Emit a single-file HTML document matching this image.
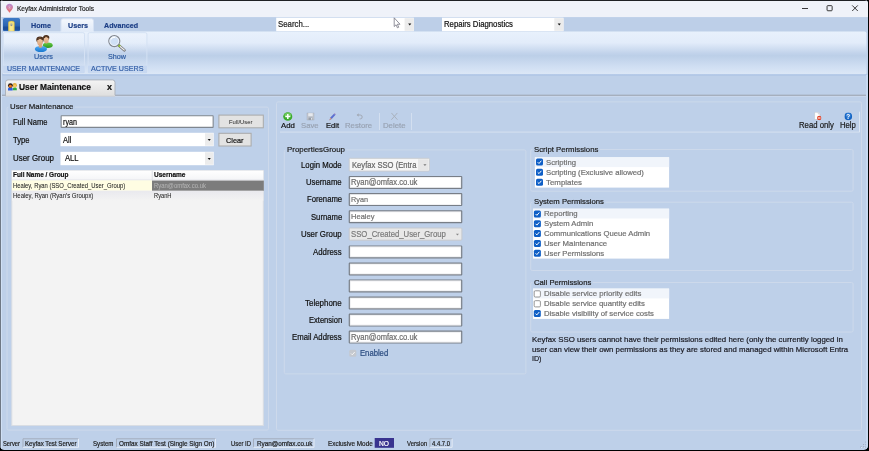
<!DOCTYPE html>
<html><head><meta charset="utf-8"><title>Keyfax Administrator Tools</title>
<style>
html,body{margin:0;padding:0;background:#000;}
body{width:869px;height:451px;position:relative;overflow:hidden;font-family:"Liberation Sans",sans-serif;}
#win{position:absolute;left:0;top:0;width:867.9px;height:449.700px;border-radius:3.5px 3.5px 4.5px 4.5px;overflow:hidden;will-change:transform;filter:blur(.4px);}
#win>svg{position:absolute;left:0;top:0;}
.t{position:absolute;white-space:nowrap;transform-origin:0 50%;display:block;-webkit-text-stroke:.2px;}
</style></head><body>
<div id="win">
<svg width="869" height="451" viewBox="0 0 869 451">
<defs><linearGradient id="g1" x1="0" y1="0" x2="0" y2="1"><stop offset="0" stop-color="#b68bd2"/><stop offset="0.45" stop-color="#d080a6"/><stop offset="1" stop-color="#ec6a5a"/></linearGradient><linearGradient id="g2" x1="0" y1="0" x2="0" y2="1"><stop offset="0" stop-color="#3f7ac6"/><stop offset="0.62" stop-color="#2a62b0"/><stop offset="0.66" stop-color="#1c4d9a"/><stop offset="0.86" stop-color="#1c4d9a"/><stop offset="0.9" stop-color="#2a62b0"/><stop offset="1" stop-color="#2a62b0"/></linearGradient><linearGradient id="g3" x1="0" y1="0" x2="0" y2="1"><stop offset="0" stop-color="#f4f8fd"/><stop offset="1" stop-color="#e0eaf8"/></linearGradient><linearGradient id="g4" x1="0" y1="0" x2="0" y2="1"><stop offset="0" stop-color="#e8f1fc"/><stop offset="0.26" stop-color="#e2ecfa"/><stop offset="0.5" stop-color="#c2d3eb"/><stop offset="0.56" stop-color="#bccfe8"/><stop offset="0.8" stop-color="#cfdef2"/><stop offset="1" stop-color="#dde8f7"/></linearGradient><linearGradient id="g5" x1="0" y1="0" x2="0" y2="1"><stop offset="0" stop-color="#fff" stop-opacity="0.18"/><stop offset="0.5" stop-color="#fff" stop-opacity="0"/><stop offset="1" stop-color="#fff" stop-opacity="0.12"/></linearGradient><linearGradient id="g6" x1="0" y1="0" x2="0" y2="1"><stop offset="0" stop-color="#6bcb45"/><stop offset="1" stop-color="#2b9620"/></linearGradient><linearGradient id="g7" x1="0" y1="0" x2="0" y2="1"><stop offset="0" stop-color="#58aef2"/><stop offset="0.55" stop-color="#2f8fe2"/><stop offset="1" stop-color="#1b78cc"/></linearGradient><linearGradient id="g8" x1="0" y1="0" x2="0" y2="1"><stop offset="0" stop-color="#f3cba6"/><stop offset="1" stop-color="#dba47a"/></linearGradient><linearGradient id="g9" x1="0" y1="0" x2="0" y2="1"><stop offset="0" stop-color="#f4f4f4"/><stop offset="0.5" stop-color="#e9e9e9"/><stop offset="1" stop-color="#dedede"/></linearGradient><linearGradient id="g10" x1="0" y1="0" x2="0" y2="1"><stop offset="0" stop-color="#fff"/><stop offset="1" stop-color="#f4f5f7"/></linearGradient><linearGradient id="g11" x1="0" y1="0" x2="0" y2="1"><stop offset="0" stop-color="#e9e9ee"/><stop offset="1" stop-color="#f3f3f3"/></linearGradient></defs>
<rect x="0" y="0" width="869" height="451" fill="#bed0e9"/>
<rect x="0" y="0" width="869" height="17.3" fill="#eff2f9"/>
<path d="M9.500 3.700C7.500 3.700 6 5.200 6 7.100c0 1.500 1 2.700 2 3.700l1.500 2 1.500-2c1-1 2-2.200 2-3.700C13 5.200 11.500 3.700 9.500 3.700z" fill="url(#g1)"/><path d="M9.500 5.200v4.600M8 6.300l3 2.400M11 6.300l-3 2.400" stroke="#f3d3e3" stroke-width=".45" opacity=".6" fill="none"/>
<path d="M802 8.500h6" stroke="#222" stroke-width=".9" fill="none"/>
<rect x="827.05" y="5.65" width="5.1" height="5.1" rx="0.75" fill="none" stroke="#222" stroke-width="0.9"/>
<path d="M852.200 5.400l5.600 5.600M857.800 5.400l-5.600 5.600" stroke="#222" stroke-width=".9" fill="none"/>
<rect x="0" y="17.3" width="869" height="14.2" fill="#bdcfe8"/>
<rect x="3" y="18" width="17" height="13.3" rx="1.5" fill="url(#g2)"/>
<svg x="8" y="20.6" width="6.8" height="10.8" viewBox="0 0 7 11"><path d="M.3 11V2.300C.3 1 1.300 .3 3.500 .3S6.700 1 6.700 2.300V11z" fill="#f4dc6c" stroke="#c9aa3c" stroke-width=".5"/><path d="M2 2.200V10.500h3V2.200z" fill="#fbeea0" opacity=".7"/><path d="M2.400 3.200h2.200M2.500 4.300h2l-1 1.300z" stroke="#7b8296" stroke-width=".5" fill="#7b8296"/></svg>
<path d="M61 32V20.800q0-2 2-2h28.500q2 0 2 2V32z" fill="url(#g3)" stroke="#d5e1f3" stroke-width="1"/>
<rect x="276.2" y="17.7" width="137.6" height="13.5" fill="#fff"/>
<rect x="404.6" y="18.2" width="9.2" height="12.6" fill="#ececec"/>
<path d="M408.2 23.6h3.100l-1.550 1.900z" fill="#111"/>
<path d="M394.200 17.800v8.700l1.900-1.700 1.300 3 1.300-.55-1.300-3h2.600z" fill="#fff" stroke="#6f6f7c" stroke-width=".75" stroke-linejoin="round"/>
<rect x="442" y="17.7" width="121.5" height="13.5" fill="#fff"/>
<rect x="554.3" y="18.2" width="9.2" height="12.6" fill="#ececec"/>
<path d="M557.7 23.6h3.100l-1.550 1.900z" fill="#111"/>
<rect x="2.5" y="31.5" width="864" height="43.3" rx="2" fill="url(#g4)"/>
<rect x="2.5" y="74.4" width="864" height="1" fill="#a2bbe2"/>
<rect x="3.3" y="32.7" width="81.2" height="40.2" rx="1.5" fill="url(#g5)" stroke="#d4e1f3" stroke-width="1"/>
<rect x="3.3" y="65.7" width="81.2" height="7.2" fill="#bcd1ef" opacity=".6"/>
<rect x="88.1" y="32.7" width="58.8" height="40.2" rx="1.5" fill="url(#g5)" stroke="#d4e1f3" stroke-width="1"/>
<rect x="88.1" y="65.7" width="58.8" height="7.2" fill="#bcd1ef" opacity=".6"/>
<g><ellipse cx="43.500" cy="44" rx="9.800" ry="8.800" fill="#fff" opacity=".18"/><ellipse cx="47.800" cy="45.300" rx="4.900" ry="2.700" fill="url(#g6)"/><ellipse cx="46.200" cy="37.700" rx="3.100" ry="2.800" fill="#4b2e1b"/><ellipse cx="46.300" cy="40" rx="2.400" ry="3.500" fill="url(#g8)"/><path d="M43.300 38.200c.8-2.300 4.800-2.700 5.900-.3-1.300.2-2.400-.3-3.100-1.100-.6.900-1.600 1.400-2.800 1.400z" fill="#4b2e1b"/><ellipse cx="40.900" cy="49" rx="6.100" ry="3.050" fill="url(#g7)"/><ellipse cx="40.400" cy="46.200" rx="1.700" ry="1.600" fill="#d9a57b"/><ellipse cx="40" cy="39.700" rx="3.700" ry="3.200" fill="#4b2e1b"/><ellipse cx="40" cy="41.700" rx="2.850" ry="3.900" fill="url(#g8)"/><path d="M36.500 40.200c.7-3 6-3.400 7-.3-1.500.2-2.800-.4-3.600-1.400-.7 1.100-1.900 1.700-3.400 1.700z" fill="#4b2e1b"/></g>
<path d="M118.600 45.200l5.800 5" stroke="#6e6e6e" stroke-width="2.700" stroke-linecap="round"/><path d="M119 45.500l5.200 4.500" stroke="#ececec" stroke-width="1.200" stroke-linecap="round"/><path d="M117.900 44.600l2.100 1.800" stroke="#8fc02c" stroke-width="2.300"/><circle cx="114.300" cy="41.100" r="5.500" fill="#d0e0f5" stroke="#83878e" stroke-width="1.200"/><circle cx="114.300" cy="41.100" r="4.400" fill="none" stroke="#f1f6fc" stroke-width=".9"/><path d="M111 39.400a3.500 3.500 0 0 1 4.100-2" stroke="#fff" stroke-width="1.100" fill="none"/>
<rect x="1" y="94.6" width="865" height="1.4" fill="#a6afbd"/>
<rect x="1" y="96" width="865" height="1" fill="#c9d7ec"/>
<path d="M5.500 96V82.400q0-2.500 2.500-2.500h104.500q2.500 0 2.500 2.500V96z" fill="url(#g9)" stroke="#adb3bd" stroke-width="1"/>
<rect x="6" y="95.2" width="109" height="1.2" fill="#dedede"/>
<g><path d="M12.900 90.200v-1.500c0-.9.800-1.300 1.900-1.300s2 .4 2 1.300v1.500z" fill="#2fae3f"/><circle cx="14.700" cy="85.300" r="2.200" fill="#e2ae3e"/><circle cx="14.700" cy="85.900" r="1.400" fill="#f7c95f"/><path d="M8 90.400v-1.600c0-.9 1-1.400 2.300-1.400s2.400.5 2.400 1.400v1.600z" fill="#2c5fe0"/><circle cx="10.400" cy="85.600" r="2.400" fill="#2c1d15"/><circle cx="10.400" cy="86.200" r="1.450" fill="#e9731d"/></g>
<rect x="7" y="107.1" width="261.5" height="323" rx="1.5" fill="none" stroke="#cdd9eb" stroke-width="1"/>
<rect x="8.5" y="102.6" width="66.5" height="8" fill="#bed0e9"/>
<rect x="61.15" y="115.75" width="152" height="11.6" rx="0.45" fill="#fff" stroke="#7f868f" stroke-width="1.1"/>
<rect x="60.5" y="132.8" width="153.2" height="13.4" fill="#fff"/>
<rect x="205" y="133.3" width="8.2" height="12.4" fill="#ececec"/>
<path d="M207.7 139h3.100l-1.550 1.900z" fill="#111"/>
<rect x="60.5" y="151.8" width="153.2" height="13.4" fill="#fff"/>
<rect x="205" y="152.3" width="8.2" height="12.4" fill="#ececec"/>
<path d="M207.7 158h3.100l-1.550 1.900z" fill="#111"/>
<rect x="218.9" y="115.1" width="44.4" height="12.7" fill="#e3e3e3" stroke="#a9a9a9" stroke-width="1"/>
<rect x="218.9" y="133.3" width="32.2" height="12.7" fill="#e3e3e3" stroke="#a9a9a9" stroke-width="1"/>
<rect x="11.8" y="170.5" width="251.5" height="255" fill="#f3f3f3" stroke="#d9dde3" stroke-width="1"/>
<rect x="12" y="170.6" width="251.3" height="9.6" fill="url(#g10)"/>
<rect x="12" y="179.6" width="251.3" height="0.8" fill="#dfe2e7"/>
<rect x="151.7" y="170.6" width="1" height="9.6" fill="#dcdfe4"/>
<rect x="12" y="180.4" width="140" height="10.2" fill="#fffde3"/>
<rect x="152" y="180.6" width="111.8" height="10.2" fill="#7c7c7c"/>
<rect x="12" y="190.8" width="251.3" height="10" fill="url(#g11)"/>
<rect x="276.5" y="101.9" width="585" height="328.4" rx="1.5" fill="none" stroke="#cdd9eb" stroke-width="1"/>
<rect x="280" y="131.6" width="579.5" height="1" fill="#d6e1f1"/>
<rect x="859" y="111.7" width="1" height="20.5" fill="#dde7f4"/>
<rect x="379" y="113" width="1" height="17" fill="#d3dff0"/>
<rect x="411" y="113" width="1" height="17" fill="#d3dff0"/>
<svg x="283" y="112" width="9.6" height="9" viewBox="0 0 9.6 9"><ellipse cx="4.800" cy="4.500" rx="4.600" ry="4.300" fill="#3cab2c"/><ellipse cx="4.800" cy="3" rx="3.400" ry="2.200" fill="#7fd46a" opacity=".7"/><path d="M4.800 2v5M2.300 4.500h5" stroke="#fff" stroke-width="1.500"/></svg>
<svg x="306.5" y="112.5" width="8" height="8" viewBox="0 0 8 8"><path d="M.4 .4h7.200v7.200H.4z" fill="#c3c8d0" stroke="#a3a9b3" stroke-width=".6"/><rect x="1.800" y=".7" width="4.400" height="2.800" fill="#e6e9ee"/><rect x="2" y="5" width="4" height="2.600" fill="#9aa0aa"/><rect x="4.600" y="5.400" width="1" height="1.800" fill="#e6e9ee"/></svg>
<svg x="328.5" y="112" width="8" height="9" viewBox="0 0 8 9"><path d="M1.200 7.800l.6-2.200L6 1.200l1.300 1.300L3.200 7z" fill="#5b6fd0"/><path d="M5.400 1.800L6.200 1l1.300 1.300-.8.800z" fill="#b7a3c8"/><path d="M1.200 7.800l.6-2.200 1.400 1.400z" fill="#e2a070"/><path d="M.9 8.200l.5-.8.500.5z" fill="#c03030"/></svg>
<svg x="356.3" y="112.8" width="7" height="7" viewBox="0 0 7 7"><path d="M1.300 2.200h2.600a2 2 0 0 1 0 4H3.300" fill="none" stroke="#a2a9b5" stroke-width="1"/><path d="M.3 2.200L2.300 .5v3.400z" fill="#a2a9b5"/></svg>
<svg x="390.8" y="112.3" width="7.2" height="8" viewBox="0 0 7.2 8"><path d="M.6 .6l6 6.800M6.600 .6l-6 6.800" stroke="#a9b1bd" stroke-width="1"/></svg>
<svg x="813.8" y="112" width="8" height="8.5" viewBox="0 0 8 8.5"><path d="M.8 .3h3.600l1.800 1.800v5.400H.8z" fill="#fff" stroke="#b9bec6" stroke-width=".5"/><path d="M4.400 .3v1.800h1.800" fill="#e4e7ec" stroke="#b9bec6" stroke-width=".4"/><circle cx="5.400" cy="6" r="2.200" fill="#e0442c"/><rect x="4.100" y="5.500" width="2.600" height="1" fill="#fff"/></svg>
<svg x="844.3" y="112.4" width="8" height="8" viewBox="0 0 8 8"><circle cx="4" cy="4" r="3.800" fill="#1463c2"/><circle cx="4" cy="3" r="2.600" fill="#3d8be0" opacity=".6"/><text x="4" y="6.300" text-anchor="middle" font-family="Liberation Sans, sans-serif" font-weight="bold" font-size="6.400" fill="#fff">?</text></svg>
<rect x="284.3" y="149.9" width="241.6" height="224" rx="1.5" fill="none" stroke="#cdd9eb" stroke-width="1"/>
<rect x="285.5" y="145.4" width="61" height="8" fill="#bed0e9"/>
<rect x="349.2" y="158.3" width="80.2" height="12.8" rx="1" fill="#f6f6f6" stroke="#c9ccd1" stroke-width="1"/>
<rect x="418" y="159.2" width="10.5" height="11" fill="#e6e6e6"/>
<path d="M423.4 164.2h3.100l-1.550 1.900z" fill="#777"/>
<rect x="349.2" y="228" width="112.7" height="12.2" rx="1" fill="#e8e8e8" stroke="#c6c9ce" stroke-width="1"/>
<path d="M455.9 233.7h3.100l-1.550 1.900z" fill="#888"/>
<rect x="349.3" y="176.5" width="112.4" height="11.8" rx="0.4" fill="#fff" stroke="#787e87" stroke-width="1.2"/>
<rect x="350.35" y="177.55" width="110.3" height="9.7" fill="none" stroke="#e3e5e9" stroke-width="0.5"/>
<rect x="349.3" y="193.7" width="112.4" height="11.8" rx="0.4" fill="#fff" stroke="#787e87" stroke-width="1.2"/>
<rect x="350.35" y="194.75" width="110.3" height="9.7" fill="none" stroke="#e3e5e9" stroke-width="0.5"/>
<rect x="349.3" y="210.9" width="112.4" height="11.8" rx="0.4" fill="#fff" stroke="#787e87" stroke-width="1.2"/>
<rect x="350.35" y="211.95" width="110.3" height="9.7" fill="none" stroke="#e3e5e9" stroke-width="0.5"/>
<rect x="349.3" y="246" width="112.4" height="11.8" rx="0.4" fill="#fff" stroke="#787e87" stroke-width="1.2"/>
<rect x="350.35" y="247.05" width="110.3" height="9.7" fill="none" stroke="#e3e5e9" stroke-width="0.5"/>
<rect x="349.3" y="263.1" width="112.4" height="11.8" rx="0.4" fill="#fff" stroke="#787e87" stroke-width="1.2"/>
<rect x="350.35" y="264.15" width="110.3" height="9.7" fill="none" stroke="#e3e5e9" stroke-width="0.5"/>
<rect x="349.3" y="280" width="112.4" height="11.8" rx="0.4" fill="#fff" stroke="#787e87" stroke-width="1.2"/>
<rect x="350.35" y="281.05" width="110.3" height="9.7" fill="none" stroke="#e3e5e9" stroke-width="0.5"/>
<rect x="349.3" y="297.1" width="112.4" height="11.8" rx="0.4" fill="#fff" stroke="#787e87" stroke-width="1.2"/>
<rect x="350.35" y="298.15" width="110.3" height="9.7" fill="none" stroke="#e3e5e9" stroke-width="0.5"/>
<rect x="349.3" y="314.2" width="112.4" height="11.8" rx="0.4" fill="#fff" stroke="#787e87" stroke-width="1.2"/>
<rect x="350.35" y="315.25" width="110.3" height="9.7" fill="none" stroke="#e3e5e9" stroke-width="0.5"/>
<rect x="349.3" y="331.2" width="112.4" height="11.8" rx="0.4" fill="#fff" stroke="#787e87" stroke-width="1.2"/>
<rect x="350.35" y="332.25" width="110.3" height="9.7" fill="none" stroke="#e3e5e9" stroke-width="0.5"/>
<rect x="349.3" y="349.8" width="7" height="7" rx="1.5" fill="#c4c8cf"/>
<path d="M351 353.5l1.300 1.300 2.400-2.800" stroke="#f6f6f6" stroke-width="1" fill="none"/>
<rect x="530.7" y="149.5" width="322.4" height="41.7" rx="1.5" fill="none" stroke="#cdd9eb" stroke-width="1"/>
<rect x="532.5" y="145" width="67.4" height="8" fill="#bed0e9"/>
<rect x="534.9" y="157.3" width="134.2" height="30.3" fill="#fff"/>
<rect x="534.9" y="157.3" width="134.2" height="9.8" fill="#f1f5fb"/>
<rect x="536" y="158.6" width="7" height="7" rx="1.5" fill="#0f5fc6"/>
<path d="M537.7 162.2l1.300 1.300 2.400-2.800" stroke="#fff" stroke-width="1" fill="none"/>
<rect x="536" y="168.7" width="7" height="7" rx="1.5" fill="#0f5fc6"/>
<path d="M537.7 172.3l1.300 1.300 2.400-2.800" stroke="#fff" stroke-width="1" fill="none"/>
<rect x="536" y="178.7" width="7" height="7" rx="1.5" fill="#0f5fc6"/>
<path d="M537.7 182.3l1.300 1.300 2.400-2.800" stroke="#fff" stroke-width="1" fill="none"/>
<rect x="530.7" y="202.2" width="322.4" height="68.3" rx="1.5" fill="none" stroke="#cdd9eb" stroke-width="1"/>
<rect x="532.5" y="197.7" width="73" height="8" fill="#bed0e9"/>
<rect x="533.1" y="208.7" width="136" height="49.9" fill="#fff"/>
<rect x="533.1" y="208.7" width="136" height="9.8" fill="#f1f5fb"/>
<rect x="533.9" y="210.4" width="7" height="7" rx="1.5" fill="#0f5fc6"/>
<path d="M535.6 214l1.300 1.300 2.400-2.800" stroke="#fff" stroke-width="1" fill="none"/>
<rect x="533.9" y="220.2" width="7" height="7" rx="1.5" fill="#0f5fc6"/>
<path d="M535.6 223.8l1.300 1.300 2.400-2.800" stroke="#fff" stroke-width="1" fill="none"/>
<rect x="533.9" y="230" width="7" height="7" rx="1.5" fill="#0f5fc6"/>
<path d="M535.6 233.6l1.300 1.300 2.400-2.800" stroke="#fff" stroke-width="1" fill="none"/>
<rect x="533.9" y="240" width="7" height="7" rx="1.5" fill="#0f5fc6"/>
<path d="M535.6 243.6l1.300 1.300 2.400-2.800" stroke="#fff" stroke-width="1" fill="none"/>
<rect x="533.9" y="249.7" width="7" height="7" rx="1.5" fill="#0f5fc6"/>
<path d="M535.6 253.3l1.300 1.300 2.400-2.800" stroke="#fff" stroke-width="1" fill="none"/>
<rect x="530.7" y="282.5" width="322.4" height="49.5" rx="1.5" fill="none" stroke="#cdd9eb" stroke-width="1"/>
<rect x="532.5" y="278" width="60.3" height="8" fill="#bed0e9"/>
<rect x="533.1" y="288.6" width="136" height="30.3" fill="#fff"/>
<rect x="533.1" y="288.6" width="136" height="9.8" fill="#f1f5fb"/>
<rect x="534.2" y="290.8" width="6.2" height="6.2" rx="1.1" fill="#fff" stroke="#7d7d7d" stroke-width="0.8"/>
<rect x="534.2" y="300.7" width="6.2" height="6.2" rx="1.1" fill="#fff" stroke="#7d7d7d" stroke-width="0.8"/>
<rect x="533.8" y="310" width="7" height="7" rx="1.5" fill="#0f5fc6"/>
<path d="M535.5 313.6l1.300 1.300 2.400-2.800" stroke="#fff" stroke-width="1" fill="none"/>
<path d="M23 447.300V438.800H78.5" fill="none" stroke="#a3adbd" stroke-width="1"/>
<path d="M23 447.300H78.5V438.800" fill="none" stroke="#e4ebf6" stroke-width="1"/>
<path d="M116.5 447.300V438.800H215.5" fill="none" stroke="#a3adbd" stroke-width="1"/>
<path d="M116.5 447.300H215.5V438.800" fill="none" stroke="#e4ebf6" stroke-width="1"/>
<path d="M253.5 447.300V438.800H314" fill="none" stroke="#a3adbd" stroke-width="1"/>
<path d="M253.5 447.300H314V438.800" fill="none" stroke="#e4ebf6" stroke-width="1"/>
<rect x="374.7" y="438" width="19.3" height="9.8" fill="#39338f"/>
<path d="M429.9 447.300V438.800H452.1" fill="none" stroke="#a3adbd" stroke-width="1"/>
<path d="M429.9 447.300H452.1V438.800" fill="none" stroke="#e4ebf6" stroke-width="1"/>
<rect x="865.5" y="446.5" width="1.2" height="1.2" fill="#8f9fb8"/>
<rect x="866.1" y="447.1" width="0.9" height="0.9" fill="#f2f6fb"/>
<rect x="863" y="446.5" width="1.2" height="1.2" fill="#8f9fb8"/>
<rect x="863.6" y="447.1" width="0.9" height="0.9" fill="#f2f6fb"/>
<rect x="865.5" y="444" width="1.2" height="1.2" fill="#8f9fb8"/>
<rect x="866.1" y="444.6" width="0.9" height="0.9" fill="#f2f6fb"/>
<rect x="860.5" y="446.5" width="1.2" height="1.2" fill="#8f9fb8"/>
<rect x="861.1" y="447.1" width="0.9" height="0.9" fill="#f2f6fb"/>
<rect x="863" y="444" width="1.2" height="1.2" fill="#8f9fb8"/>
<rect x="863.6" y="444.6" width="0.9" height="0.9" fill="#f2f6fb"/>
<rect x="865.5" y="441.5" width="1.2" height="1.2" fill="#8f9fb8"/>
<rect x="866.1" y="442.1" width="0.9" height="0.9" fill="#f2f6fb"/>
<rect x="0" y="0" width="0.9" height="451" fill="#5b626d"/>
<rect x="0.9" y="17.3" width="1.1" height="433" fill="#d0e0f5"/>
<rect x="866" y="75" width="2" height="376" fill="#c7d9f1"/>
<rect x="0" y="0" width="869" height="1" fill="#1e2024"/>
</svg>
<span class="t" style="left:17px;top:3px;font-size:7.4px;line-height:11px;color:#1c1c1c;transform:scaleX(0.8845)">Keyfax Administrator Tools</span>
<span class="t" style="left:31px;top:20px;font-size:7.6px;line-height:11px;color:#1d3f86;font-weight:bold;transform:scaleX(0.9472)">Home</span>
<span class="t" style="left:67.5px;top:20px;font-size:7.6px;line-height:11px;color:#1d3f86;font-weight:bold;transform:scaleX(0.9467)">Users</span>
<span class="t" style="left:103.5px;top:20px;font-size:7.6px;line-height:11px;color:#1d3f86;font-weight:bold;transform:scaleX(0.9361)">Advanced</span>
<span class="t" style="left:277.8px;top:19px;font-size:8.2px;line-height:11px;color:#222;transform:scaleX(0.9539)">Search...</span>
<span class="t" style="left:444px;top:19px;font-size:8.2px;line-height:11px;color:#111;transform:scaleX(0.9463)">Repairs Diagnostics</span>
<span class="t" style="left:34px;top:51px;font-size:8.1px;line-height:11px;color:#2c5aa0;transform:scaleX(0.8983)">Users</span>
<span class="t" style="left:108px;top:51px;font-size:8.1px;line-height:11px;color:#2c5aa0;transform:scaleX(0.8884)">Show</span>
<span class="t" style="left:7px;top:63px;font-size:8.1px;line-height:11px;color:#345fa6;transform:scaleX(0.8720)">USER MAINTENANCE</span>
<span class="t" style="left:90.5px;top:63px;font-size:8.1px;line-height:11px;color:#345fa6;transform:scaleX(0.8836)">ACTIVE USERS</span>
<span class="t" style="left:19px;top:82px;font-size:8.2px;line-height:11px;color:#111;font-weight:bold;transform:scaleX(1.0260)">User Maintenance</span>
<span class="t" style="left:106.5px;top:81px;font-size:8.6px;line-height:12px;color:#111;font-weight:bold;transform:scaleX(1.0455)">x</span>
<span class="t" style="left:10px;top:101px;font-size:8.1px;line-height:11px;color:#1b1b1b;transform:scaleX(0.9661)">User Maintenance</span>
<span class="t" style="left:12.5px;top:117px;font-size:8.2px;line-height:11px;color:#111;transform:scaleX(0.9234)">Full Name</span>
<span class="t" style="left:12.5px;top:135px;font-size:8.2px;line-height:11px;color:#111;transform:scaleX(0.9282)">Type</span>
<span class="t" style="left:12.5px;top:153px;font-size:8.2px;line-height:11px;color:#111;transform:scaleX(0.9675)">User Group</span>
<span class="t" style="left:62.5px;top:117px;font-size:8.2px;line-height:11px;color:#111;transform:scaleX(0.8777)">ryan</span>
<span class="t" style="left:63px;top:135px;font-size:8.2px;line-height:11px;color:#111;transform:scaleX(0.9107)">All</span>
<span class="t" style="left:65px;top:153px;font-size:8.2px;line-height:11px;color:#111;transform:scaleX(0.9253)">ALL</span>
<span class="t" style="left:229px;top:117px;font-size:6.2px;line-height:9px;color:#222;-webkit-text-stroke:0px;transform:scaleX(0.9475)">Full/User</span>
<span class="t" style="left:226px;top:135px;font-size:8px;line-height:11px;color:#111;transform:scaleX(0.9155)">Clear</span>
<span class="t" style="left:13px;top:170px;font-size:6.9px;line-height:9px;color:#111;font-weight:bold;transform:scaleX(0.9340)">Full Name / Group</span>
<span class="t" style="left:153.5px;top:170px;font-size:6.9px;line-height:9px;color:#111;font-weight:bold;transform:scaleX(0.9440)">Username</span>
<span class="t" style="left:13px;top:181px;font-size:6.7px;line-height:9px;color:#222;-webkit-text-stroke:0.05px;transform:scaleX(0.8791)">Healey, Ryan (SSO_Created_User_Group)</span>
<span class="t" style="left:153.5px;top:181px;font-size:6.7px;line-height:9px;color:#b4b4b4;-webkit-text-stroke:0.05px;transform:scaleX(0.8880)">Ryan@omfax.co.uk</span>
<span class="t" style="left:13px;top:191px;font-size:6.7px;line-height:9px;color:#222;-webkit-text-stroke:0.05px;transform:scaleX(0.8930)">Healey, Ryan (Ryan's Groupx)</span>
<span class="t" style="left:153.5px;top:191px;font-size:6.7px;line-height:9px;color:#222;-webkit-text-stroke:0.05px;transform:scaleX(0.8545)">RyanH</span>
<span class="t" style="left:280.6px;top:120px;font-size:8.1px;line-height:11px;color:#111;transform:scaleX(0.9645)">Add</span>
<span class="t" style="left:301px;top:120px;font-size:8.1px;line-height:11px;color:#98a2b2;transform:scaleX(0.9533)">Save</span>
<span class="t" style="left:325.5px;top:120px;font-size:8.1px;line-height:11px;color:#111;transform:scaleX(0.9314)">Edit</span>
<span class="t" style="left:345.4px;top:120px;font-size:8.1px;line-height:11px;color:#98a2b2;transform:scaleX(0.9556)">Restore</span>
<span class="t" style="left:382.5px;top:120px;font-size:8.1px;line-height:11px;color:#98a2b2;transform:scaleX(0.9610)">Delete</span>
<span class="t" style="left:799px;top:120px;font-size:8.2px;line-height:11px;color:#1b1b1b;transform:scaleX(0.9452)">Read only</span>
<span class="t" style="left:839.7px;top:120px;font-size:8.2px;line-height:11px;color:#1b1b1b;transform:scaleX(0.9428)">Help</span>
<span class="t" style="left:287px;top:144px;font-size:8.1px;line-height:11px;color:#1b1b1b;transform:scaleX(0.9760)">PropertiesGroup</span>
<span class="t" style="left:301px;top:160px;font-size:8.2px;line-height:11px;color:#111;transform:scaleX(0.9498)">Login Mode</span>
<span class="t" style="left:306px;top:177px;font-size:8.2px;line-height:11px;color:#111;transform:scaleX(0.9439)">Username</span>
<span class="t" style="left:306.5px;top:194px;font-size:8.2px;line-height:11px;color:#111;transform:scaleX(0.9420)">Forename</span>
<span class="t" style="left:310.5px;top:212px;font-size:8.2px;line-height:11px;color:#111;transform:scaleX(0.9378)">Surname</span>
<span class="t" style="left:301px;top:229px;font-size:8.2px;line-height:11px;color:#111;transform:scaleX(0.9604)">User Group</span>
<span class="t" style="left:313px;top:247px;font-size:8.2px;line-height:11px;color:#111;transform:scaleX(0.9541)">Address</span>
<span class="t" style="left:305px;top:298px;font-size:8.2px;line-height:11px;color:#111;transform:scaleX(0.9698)">Telephone</span>
<span class="t" style="left:308.5px;top:315px;font-size:8.2px;line-height:11px;color:#111;transform:scaleX(0.9220)">Extension</span>
<span class="t" style="left:292px;top:332px;font-size:8.2px;line-height:11px;color:#111;transform:scaleX(0.9483)">Email Address</span>
<span class="t" style="left:351.5px;top:160px;font-size:8.2px;line-height:11px;color:#666;transform:scaleX(0.9311)">Keyfax SSO (Entra</span>
<span class="t" style="left:351px;top:229px;font-size:8.2px;line-height:11px;color:#7b7b7b;transform:scaleX(0.9475)">SSO_Created_User_Group</span>
<span class="t" style="left:351px;top:177px;font-size:8.2px;line-height:11px;color:#6d6d6d;transform:scaleX(0.9279)">Ryan@omfax.co.uk</span>
<span class="t" style="left:351px;top:194px;font-size:8.1px;line-height:11px;color:#707070;transform:scaleX(0.8991)">Ryan</span>
<span class="t" style="left:351px;top:211px;font-size:8.1px;line-height:11px;color:#707070;transform:scaleX(0.9321)">Healey</span>
<span class="t" style="left:351px;top:332px;font-size:8.2px;line-height:11px;color:#6d6d6d;transform:scaleX(0.9279)">Ryan@omfax.co.uk</span>
<span class="t" style="left:359.8px;top:348px;font-size:8.2px;line-height:11px;color:#2b4c80;transform:scaleX(0.9371)">Enabled</span>
<span class="t" style="left:534px;top:144px;font-size:8.1px;line-height:11px;color:#1b1b1b;transform:scaleX(0.9603)">Script Permissions</span>
<span class="t" style="left:546px;top:157px;font-size:8.1px;line-height:11px;color:#6f6f6f;transform:scaleX(0.9520)">Scripting</span>
<span class="t" style="left:546px;top:167px;font-size:8.1px;line-height:11px;color:#6f6f6f;transform:scaleX(0.9507)">Scripting (Exclusive allowed)</span>
<span class="t" style="left:546px;top:177px;font-size:8.1px;line-height:11px;color:#6f6f6f;transform:scaleX(0.9752)">Templates</span>
<span class="t" style="left:534px;top:196px;font-size:8.1px;line-height:11px;color:#1b1b1b;transform:scaleX(0.9541)">System Permissions</span>
<span class="t" style="left:543.8px;top:208px;font-size:8.1px;line-height:11px;color:#6f6f6f;transform:scaleX(0.9596)">Reporting</span>
<span class="t" style="left:543.8px;top:218px;font-size:8.1px;line-height:11px;color:#6f6f6f;transform:scaleX(0.9504)">System Admin</span>
<span class="t" style="left:543.8px;top:228px;font-size:8.1px;line-height:11px;color:#6f6f6f;transform:scaleX(0.9512)">Communications Queue Admin</span>
<span class="t" style="left:543.8px;top:238px;font-size:8.1px;line-height:11px;color:#6f6f6f;transform:scaleX(0.9615)">User Maintenance</span>
<span class="t" style="left:543.8px;top:248px;font-size:8.1px;line-height:11px;color:#6f6f6f;transform:scaleX(0.9486)">User Permissions</span>
<span class="t" style="left:534px;top:277px;font-size:8.1px;line-height:11px;color:#1b1b1b;transform:scaleX(0.9500)">Call Permissions</span>
<span class="t" style="left:544px;top:288px;font-size:8.1px;line-height:11px;color:#6f6f6f;transform:scaleX(0.9670)">Disable service priority edits</span>
<span class="t" style="left:544px;top:298px;font-size:8.1px;line-height:11px;color:#6f6f6f;transform:scaleX(0.9629)">Disable service quantity edits</span>
<span class="t" style="left:544px;top:308px;font-size:8.1px;line-height:11px;color:#6f6f6f;transform:scaleX(0.9546)">Disable visibility of service costs</span>
<span class="t" style="left:532px;top:334px;font-size:8.1px;line-height:11px;color:#1a1a22;transform:scaleX(0.9702)">Keyfax SSO users cannot have their permissions edited here (only the currently logged in</span>
<span class="t" style="left:532px;top:344px;font-size:8.1px;line-height:11px;color:#1a1a22;transform:scaleX(0.9628)">user can view their own permissions as they are stored and managed within Microsoft Entra</span>
<span class="t" style="left:532px;top:353px;font-size:8.1px;line-height:11px;color:#1a1a22;transform:scaleX(0.8799)">ID)</span>
<span class="t" style="left:3px;top:439px;font-size:6.9px;line-height:9px;color:#222;transform:scaleX(0.8365)">Server</span>
<span class="t" style="left:25px;top:439px;font-size:6.9px;line-height:9px;color:#222;transform:scaleX(0.8913)">Keyfax Test Server</span>
<span class="t" style="left:92.5px;top:439px;font-size:6.9px;line-height:9px;color:#222;transform:scaleX(0.8912)">System</span>
<span class="t" style="left:118.5px;top:439px;font-size:6.9px;line-height:9px;color:#222;transform:scaleX(0.9246)">Omfax Staff Test (Single Sign On)</span>
<span class="t" style="left:230.5px;top:439px;font-size:6.9px;line-height:9px;color:#222;transform:scaleX(0.8510)">User ID</span>
<span class="t" style="left:256.5px;top:439px;font-size:6.9px;line-height:9px;color:#222;transform:scaleX(0.9203)">Ryan@omfax.co.uk</span>
<span class="t" style="left:327.7px;top:439px;font-size:6.9px;line-height:9px;color:#222;transform:scaleX(0.9272)">Exclusive Mode</span>
<span class="t" style="left:379px;top:439px;font-size:6.9px;line-height:9px;color:#fff;transform:scaleX(0.9662)">NO</span>
<span class="t" style="left:406.5px;top:439px;font-size:6.9px;line-height:9px;color:#222;transform:scaleX(0.8734)">Version</span>
<span class="t" style="left:432px;top:439px;font-size:6.9px;line-height:9px;color:#222;transform:scaleX(0.8531)">4.4.7.0</span>
</div>
</body></html>
